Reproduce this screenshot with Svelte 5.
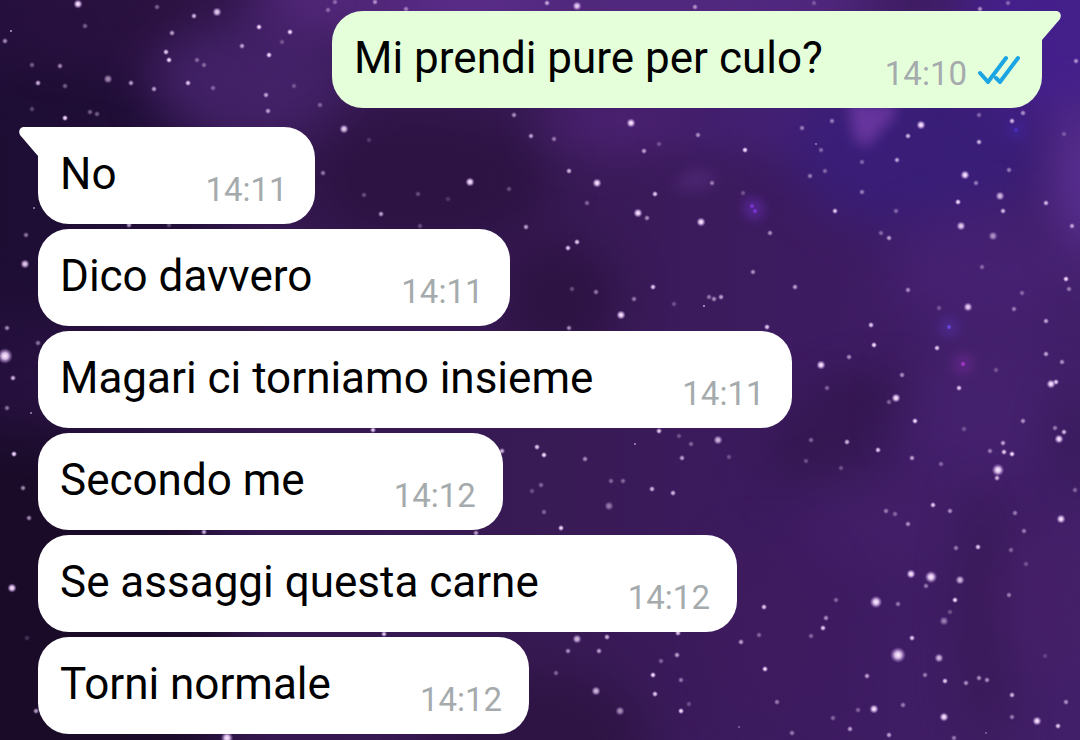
<script>
	const messages = [
		{ text: 'Mi prendi pure per culo?', time: '14:10', mine: true, first: true },
		{ text: 'No', time: '14:11', first: true },
		{ text: 'Dico davvero', time: '14:11' },
		{ text: 'Magari ci torniamo insieme', time: '14:11' },
		{ text: 'Secondo me', time: '14:12' },
		{ text: 'Se assaggi questa carne', time: '14:12' },
		{ text: 'Torni normale', time: '14:12' }
	];

	// soft clouds: x, y, rx, ry, colour, opacity
	const clouds = [
		[60, 190, 160, 130, '#1b0c30', 0.7],
		[20, 650, 210, 220, '#190b27', 0.9],
		[120, 20, 110, 40, '#28103c', 0.7],
		[250, 80, 100, 60, '#4a2673', 0.7],
		[400, 0, 150, 40, '#5b2c88', 0.8],
		[640, 0, 240, 50, '#603297', 0.6],
		[430, 180, 120, 70, '#2a1240', 0.8],
		[560, 300, 60, 60, '#28103c', 0.7],
		[620, 120, 80, 30, '#542580', 0.7],
		[770, 120, 90, 30, '#4c2788', 0.6],
		[920, 150, 130, 80, '#381e7c', 0.8],
		[1050, 30, 90, 90, '#452094', 0.8],
		[1085, 180, 30, 80, '#6034a0', 0.8],
		[980, 270, 90, 60, '#482277', 0.7],
		[875, 400, 60, 18, '#2a113e', 0.8],
		[825, 450, 60, 50, '#33174e', 0.8],
		[990, 410, 90, 80, '#46226f', 0.8],
		[1070, 440, 20, 60, '#30164e', 0.6],
		[880, 520, 90, 50, '#44206a', 0.6],
		[985, 620, 20, 140, '#321547', 0.6],
		[1050, 600, 50, 80, '#462069', 0.7],
		[770, 630, 60, 90, '#401b5e', 0.5],
		[540, 740, 110, 70, '#2a123e', 0.7]
	];

	// x, y, radius, opacity
	const stars = [
		[78, 4, 3, 1], [157, 7, 2, 0.4], [194, 16, 2, 0.8], [217, 12, 3, 0.9], [328, 10, 2, 0.4],
		[11, 31, 1, 0.7], [5, 41, 2, 0.6], [85, 26, 2, 0.4], [172, 33, 2, 0.7], [259, 27, 2, 1],
		[290, 32, 2, 1], [282, 42, 2, 0.3], [242, 46, 2, 0.7], [269, 55, 2, 1], [166, 52, 2, 0.9],
		[169, 60, 2, 1], [197, 60, 2, 0.4], [204, 65, 2, 0.4], [32, 65, 2, 0.4], [60, 66, 2, 0.6],
		[38, 83, 2, 0.8], [65, 86, 2, 0.4], [108, 79, 3, 0.6], [131, 83, 2, 0.7], [154, 89, 2, 0.7],
		[188, 83, 2, 0.9], [213, 88, 2, 0.4], [266, 95, 2, 0.7], [268, 111, 2, 0.7], [294, 86, 2, 0.3],
		[320, 105, 2, 0.4], [32, 109, 2, 0.3], [65, 118, 2, 1], [90, 112, 2, 0.4], [97, 114, 2, 0.4],
		[344, 129, 3, 0.9], [369, 140, 2, 0.2], [323, 173, 2, 0.5], [470, 182, 3, 1], [364, 195, 2, 0.3],
		[418, 194, 2, 0.3], [381, 214, 2, 0.7], [514, 115, 2, 0.6], [531, 136, 2, 0.7], [509, 189, 2, 0.3],
		[526, 227, 2, 0.7], [420, 226, 2, 0.3], [448, 199, 2, 0.2], [129, 225, 2, 0.7], [169, 225, 2, 0.3],
		[335, 2, 2, 0.4], [375, 2, 2, 0.6], [406, 9, 2, 0.5], [547, 3, 2, 0.7], [577, 6, 3, 0.9],
		[695, 7, 2, 0.6], [980, 9, 2, 0.6], [1008, 3, 2, 0.4], [814, 3, 2, 0.3],
		[554, 139, 2, 0.5], [631, 123, 3, 1], [698, 135, 2, 0.6], [644, 151, 2, 0.7], [659, 144, 2, 0.3],
		[745, 150, 2, 1], [569, 171, 2, 0.8], [597, 183, 3, 1], [655, 194, 2, 0.9], [712, 183, 2, 0.5],
		[587, 203, 2, 0.4], [638, 213, 3, 1], [647, 218, 2, 0.6], [701, 222, 3, 1], [743, 193, 2, 0.3],
		[770, 233, 2, 0.6], [577, 242, 2, 0.9], [568, 248, 2, 0.9], [572, 289, 2, 0.3], [596, 292, 2, 0.5],
		[653, 287, 2, 0.9], [634, 299, 2, 0.5], [621, 315, 3, 1], [709, 297, 2, 0.5], [714, 299, 2, 0.6],
		[721, 297, 2, 0.7], [704, 306, 1, 0.7], [753, 272, 2, 0.6], [795, 287, 2, 0.7], [767, 327, 2, 0.9],
		[674, 304, 2, 0.3], [569, 328, 2, 0.6], [802, 128, 2, 0.5],
		[832, 121, 2, 0.5], [921, 125, 3, 1], [908, 136, 2, 0.8], [897, 160, 2, 0.7], [979, 115, 2, 0.4],
		[1023, 113, 2, 0.6], [1012, 121, 2, 0.8], [979, 142, 2, 0.8], [821, 150, 2, 0.4], [816, 144, 1, 0.5],
		[862, 162, 2, 0.4], [825, 171, 2, 0.4], [810, 176, 2, 0.5], [965, 175, 3, 1], [976, 183, 2, 0.5],
		[1009, 170, 2, 0.5], [862, 192, 2, 0.5], [835, 211, 2, 0.9], [896, 211, 2, 0.4], [958, 202, 2, 1],
		[1000, 196, 3, 0.8], [1003, 211, 2, 0.8], [1046, 203, 2, 0.8], [961, 226, 3, 0.9], [993, 236, 3, 0.6],
		[881, 233, 2, 0.4], [889, 238, 2, 0.7], [1072, 226, 2, 0.7], [1076, 61, 2, 0.6], [1064, 134, 2, 0.3],
		[982, 267, 2, 0.4], [908, 290, 2, 0.6], [939, 308, 2, 0.3], [968, 307, 3, 0.9], [1014, 309, 2, 0.5],
		[1022, 293, 2, 0.4], [1066, 279, 2, 1], [1069, 289, 2, 0.5], [1046, 321, 2, 0.7],
		[871, 325, 2, 0.9], [874, 345, 2, 1], [849, 357, 2, 0.6], [821, 365, 3, 1], [937, 348, 2, 0.9],
		[902, 375, 2, 0.6], [959, 388, 2, 0.9], [896, 398, 3, 1], [889, 402, 2, 0.4], [915, 421, 2, 1],
		[996, 370, 2, 0.3], [1046, 354, 2, 0.7], [1062, 362, 2, 0.6], [1051, 384, 3, 1], [1056, 382, 2, 0.9],
		[964, 429, 2, 0.3], [1023, 421, 2, 0.6], [1055, 428, 2, 0.5], [1064, 432, 2, 0.8], [1059, 439, 3, 1],
		[1003, 443, 2, 0.7], [1004, 452, 2, 0.9], [1012, 454, 2, 1], [990, 451, 2, 0.5], [998, 470, 4, 1],
		[997, 478, 2, 0.8], [811, 440, 2, 0.4], [847, 442, 2, 0.8], [878, 450, 2, 0.9], [912, 458, 2, 0.7],
		[806, 461, 2, 0.3], [841, 468, 2, 0.3], [941, 464, 2, 0.4], [933, 505, 2, 0.9], [950, 511, 2, 0.6],
		[886, 511, 2, 0.5], [895, 514, 2, 0.4], [908, 524, 2, 0.6], [1015, 513, 2, 0.5], [1061, 519, 3, 1],
		[1075, 490, 2, 0.4], [827, 388, 2, 0.4],
		[502, 451, 2, 0.8], [537, 447, 2, 0.9], [544, 455, 2, 1], [585, 459, 2, 0.6], [659, 431, 2, 0.9],
		[679, 436, 2, 0.3], [691, 444, 2, 0.4], [718, 440, 3, 0.8], [682, 458, 2, 0.7], [635, 444, 1, 0.6],
		[541, 485, 2, 0.4], [611, 481, 2, 0.4], [623, 481, 2, 0.4], [652, 489, 2, 0.8], [673, 493, 2, 0.8],
		[609, 506, 3, 0.5], [544, 512, 2, 0.4], [561, 528, 2, 1], [532, 491, 2, 0.3], [729, 457, 2, 0.3],
		[577, 639, 3, 0.8], [607, 637, 2, 0.8], [678, 633, 2, 0.9], [568, 651, 2, 0.6], [599, 651, 2, 0.7],
		[677, 655, 2, 0.7], [556, 673, 2, 0.4], [661, 661, 2, 0.4], [653, 675, 2, 1], [681, 680, 2, 0.5],
		[596, 691, 3, 0.8], [655, 694, 2, 0.9], [620, 711, 3, 0.6], [681, 711, 2, 1], [689, 704, 2, 0.3],
		[764, 607, 2, 0.9], [741, 642, 2, 0.7], [759, 635, 2, 0.4], [765, 669, 2, 1], [777, 702, 2, 0.5],
		[792, 733, 2, 0.5], [739, 727, 1, 0.4],
		[911, 574, 3, 1], [931, 577, 4, 1], [926, 586, 2, 0.5], [960, 580, 3, 0.8], [876, 602, 4, 1],
		[898, 604, 2, 0.5], [955, 600, 2, 1], [944, 621, 3, 0.5], [950, 612, 2, 0.3], [978, 547, 2, 0.9],
		[956, 548, 2, 0.5], [1011, 550, 2, 0.4], [1024, 531, 2, 0.5], [1026, 564, 2, 0.3], [1009, 595, 2, 0.5],
		[826, 618, 2, 0.6], [823, 628, 2, 0.9], [811, 636, 2, 0.4], [836, 600, 2, 0.4], [912, 638, 2, 0.9],
		[898, 655, 5, 1], [939, 658, 3, 0.8], [867, 676, 2, 0.7], [925, 675, 2, 0.5], [945, 681, 2, 0.9],
		[966, 683, 2, 0.6], [979, 678, 2, 0.6], [987, 680, 2, 0.6], [1012, 695, 2, 0.8], [874, 709, 3, 1],
		[903, 705, 2, 0.5], [944, 717, 3, 1], [1012, 717, 2, 0.5], [1037, 721, 3, 1], [1058, 726, 2, 0.9],
		[1066, 702, 2, 0.6], [1045, 656, 2, 0.2], [833, 718, 2, 0.4], [850, 729, 2, 0.7], [889, 735, 2, 0.7],
		[954, 738, 2, 0.5], [858, 710, 2, 0.4], [986, 733, 1, 0.4],
		[26, 235, 2, 0.5], [25, 264, 3, 0.9], [7, 328, 2, 0.6], [5, 356, 5, 1], [13, 378, 2, 0.8],
		[38, 343, 2, 0.5], [7, 408, 2, 0.5], [31, 413, 1, 0.6], [14, 454, 2, 1], [23, 488, 2, 0.6],
		[29, 518, 2, 0.6], [12, 588, 3, 1], [27, 638, 2, 0.2], [36, 711, 2, 0.7], [34, 208, 1, 0.6],
		[373, 430, 2, 0.9], [204, 532, 2, 0.8], [476, 533, 2, 0.7], [384, 634, 2, 0.9], [227, 738, 4, 1]
	];

	const glows = [
		[949, 327, '#6a4be8'],
		[963, 364, '#b03bd0'],
		[752, 206, '#7d38df'],
		[755, 211, '#7d38df'],
		[1016, 130, '#4830cc']
	];
</script>

<svg class="sky" viewBox="0 0 1080 740" preserveAspectRatio="xMidYMid slice" aria-hidden="true">
	<defs>
		<linearGradient id="space" x1="0" y1="0" x2="1" y2="0">
			<stop offset="0" stop-color="#25103d" />
			<stop offset="0.25" stop-color="#34184f" />
			<stop offset="0.5" stop-color="#381a54" />
			<stop offset="0.75" stop-color="#3d1b61" />
			<stop offset="1" stop-color="#422069" />
		</linearGradient>
		<filter id="haze" x="-300%" y="-300%" width="700%" height="700%" color-interpolation-filters="sRGB">
			<feGaussianBlur stdDeviation="24" />
		</filter>
		<filter id="wisp" x="-300%" y="-300%" width="700%" height="700%" color-interpolation-filters="sRGB">
			<feGaussianBlur stdDeviation="7" />
		</filter>
		<radialGradient id="star">
			<stop offset="0" stop-color="#fff2ff" />
			<stop offset="0.4" stop-color="#e9ccf5" stop-opacity="0.9" />
			<stop offset="1" stop-color="#a678cf" stop-opacity="0" />
		</radialGradient>
	</defs>
	<rect width="1080" height="740" fill="url(#space)" />
	{#each clouds as [x, y, rx, ry, color, opacity]}
		<ellipse cx={x} cy={y} {rx} {ry} fill={color} {opacity} filter="url(#haze)" />
	{/each}
	<path d="M848 95Q880 115 896 95L894 118Q878 132 870 145Q856 150 852 128Z" fill="#7a3fae" opacity="0.7" filter="url(#wisp)" />
	<path d="M690 168L720 175L705 190L670 190Z" fill="#653793" opacity="0.4" filter="url(#wisp)" />
	{#each glows as [x, y, color]}
		<circle cx={x} cy={y} r="7" fill={color} opacity="0.5" filter="url(#wisp)" />
		<circle cx={x} cy={y} r="2" fill={color} opacity="0.8" />
	{/each}
	{#each stars as [x, y, r, opacity]}
		<circle cx={x} cy={y} r={r * 1.6} fill="url(#star)" {opacity} />
	{/each}
</svg>

<main class="chat">
	{#each messages as message}
		<article class="bubble" class:mine={message.mine} class:first={message.first}>
			{#if message.first}
				<svg class="tail" viewBox="0 0 20 30" aria-hidden="true">
					<path d="M20 0H5C1 0 -1 4 1 8L19 29H20Z" />
				</svg>
			{/if}
			<p class="text">{message.text}</p>
			<div class="meta">
				<time>{message.time}</time>
				{#if message.mine}
					<svg class="ticks" viewBox="0 0 42 30" role="img" aria-label="Letto">
						<path d="M2 19L10 28L28 4M18 24L22 28L40 4" />
					</svg>
				{/if}
			</div>
		</article>
	{/each}
</main>

<style>
	:global(body) {
		margin: 0;
		background: #2c1446;
	}

	.sky {
		position: fixed;
		top: 0;
		left: 0;
		width: 100%;
		height: 100%;
	}

	.chat {
		position: relative;
		display: flex;
		flex-direction: column;
		align-items: flex-start;
		gap: 5px;
		padding: 11px 38px 6px;
		font-family: Roboto, "Liberation Sans", sans-serif;
	}

	.bubble {
		position: relative;
		display: flex;
		align-items: flex-end;
		gap: 89px;
		box-sizing: border-box;
		padding: 21px 27px 14px 22px;
		border-radius: 31px;
		background: #fff;
	}

	.bubble.first {
		border-top-left-radius: 0;
	}

	.bubble.mine {
		align-self: flex-end;
		gap: 62px;
		margin-bottom: 14px;
		padding-right: 22px;
		border-radius: 31px 0 31px 31px;
		background: #e5ffdb;
	}

	.tail {
		position: absolute;
		top: 0;
		left: -19px;
		width: 20px;
		height: 30px;
		fill: #fff;
	}

	.mine .tail {
		left: auto;
		right: -19px;
		fill: #e5ffdb;
		transform: scaleX(-1);
	}

	.text {
		margin: 0;
		padding-bottom: 10px;
		font-size: 44px;
		line-height: 52px;
		color: #000;
	}

	.meta {
		display: flex;
		align-items: flex-start;
		gap: 11px;
		font-size: 33px;
		line-height: 40px;
		color: #a5abad;
	}

	.ticks {
		width: 42px;
		height: 30px;
		fill: none;
		stroke: #1ba5e2;
		stroke-width: 4;
		stroke-linecap: round;
	}
</style>
